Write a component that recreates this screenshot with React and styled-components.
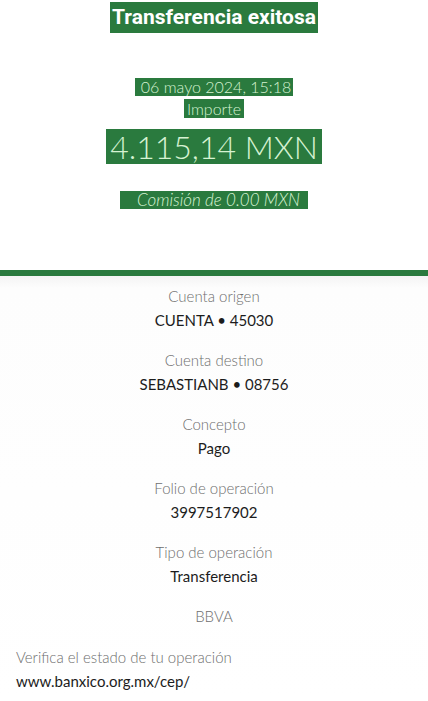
import React from "react";
import styled, { createGlobalStyle } from "styled-components";

const Global = createGlobalStyle`
  html, body { margin: 0; padding: 0; background: #ffffff; }
  body { font-family: "Lato", "Liberation Sans", sans-serif; }
`;

const Page = styled.div`
  width: 428px;
  height: 701px;
  overflow: hidden;
  display: flex;
  flex-direction: column;
  background: #ffffff;
`;

const Header = styled.header`
  display: flex;
  flex-direction: column;
  align-items: center;
  height: 276px;
  box-sizing: border-box;
  padding-top: 2px;
  border-bottom: 6px solid #2a7a3e;
`;

const Mark = styled.span`
  display: inline-block;
  background: #2a7a3e;
  color: ${(p) => (p.$white ? "#ffffff" : "#d6f2d2")};
  font-family: ${(p) => (p.$bold ? '"Roboto", "Liberation Sans", sans-serif' : '"Lato", "Liberation Sans", sans-serif')};
  font-weight: ${(p) => (p.$bold ? 700 : 300)};
  font-style: ${(p) => (p.$italic ? "italic" : "normal")};
  font-size: ${(p) => p.$size}px;
  line-height: ${(p) => p.$lh}px;
  padding: 0 ${(p) => p.$pr ?? p.$px}px 0 ${(p) => p.$px}px;
  margin-top: ${(p) => p.$mt}px;
  white-space: nowrap;
`;

const Details = styled.main`
  flex: 1;
  display: flex;
  flex-direction: column;
  background: linear-gradient(#f4f4f4, #fdfdfd 12px, #ffffff);
  padding-top: 10px;
`;

const Field = styled.div`
  display: flex;
  flex-direction: column;
  align-items: center;
  gap: 4px;
  margin-bottom: 20px;
`;

const Label = styled.div`
  font-family: "Lato", "Liberation Sans", sans-serif;
  font-weight: 300;
  font-size: 15px;
  line-height: 20px;
  color: #6e6e6e;
`;

const Value = styled.div`
  font-family: "Lato", "Liberation Sans", sans-serif;
  font-weight: 400;
  font-size: 15px;
  line-height: 20px;
  color: #1c1c1c;
`;

const Footer = styled.div`
  display: flex;
  flex-direction: column;
  align-items: flex-start;
  gap: 4px;
  padding: 0 16px;
  margin-top: 1px;
`;

const fields = [
  ["Cuenta origen", "CUENTA • 45030"],
  ["Cuenta destino", "SEBASTIANB • 08756"],
  ["Concepto", "Pago"],
  ["Folio de operación", "3997517902"],
  ["Tipo de operación", "Transferencia"],
];

export default function App() {
  return (
    <Page>
      <Global />
      <Header>
        <Mark $white $bold $size={21} $lh={31} $px={2}>Transferencia exitosa</Mark>
        <Mark $size={16} $lh={18} $px={6} $pr={2} $mt={45}>06 mayo 2024, 15:18</Mark>
        <Mark $size={16} $lh={19} $px={3} $mt={3}>Importe</Mark>
        <Mark $size={32} $lh={35} $px={4} $mt={11}>4.115,14 MXN</Mark>
        <Mark $italic $size={17} $lh={18} $px={17} $pr={8} $mt={27}>Comisión de 0.00 MXN</Mark>
      </Header>
      <Details>
        {fields.map(([l, v]) => (
          <Field key={l}>
            <Label>{l}</Label>
            <Value>{v}</Value>
          </Field>
        ))}
        <Field>
          <Label>BBVA</Label>
        </Field>
        <Footer>
          <Label>Verifica el estado de tu operación</Label>
          <Value>www.banxico.org.mx/cep/</Value>
        </Footer>
      </Details>
    </Page>
  );
}
